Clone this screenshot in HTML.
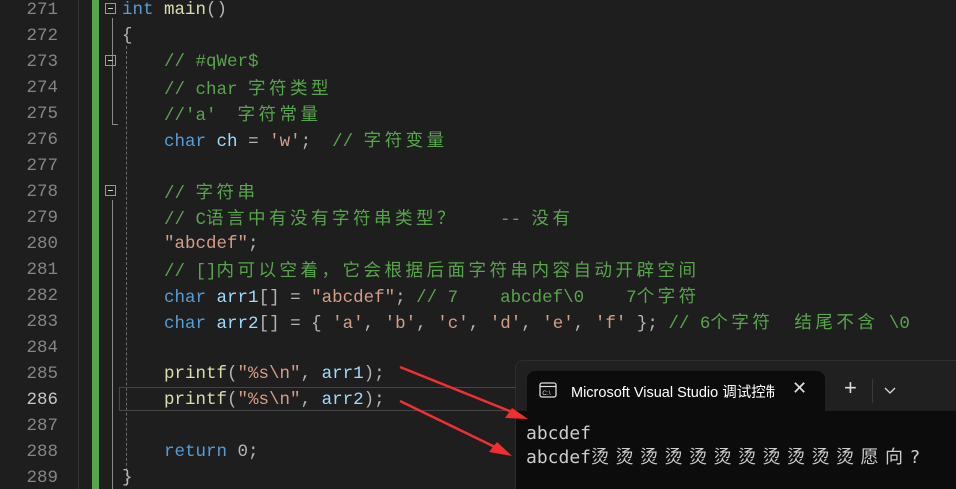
<!DOCTYPE html>
<html style="overflow:hidden;height:489px"><head><meta charset="utf-8"><style>
body{margin:0;width:956px;height:489px;background:#1e1e1e;overflow:hidden;position:relative;font-family:"Liberation Mono","Noto Sans CJK SC",monospace;}
.ln{position:absolute;left:0;width:58px;text-align:right;color:#858585;font-size:17.5px;height:26px;line-height:26px;}
.c{position:absolute;left:122px;font-size:17.5px;height:26px;line-height:26px;white-space:pre;color:#dcdcdc;}
.k{color:#569cd6}.cm{color:#57a64a}.s{color:#d69d85}.v{color:#9cdcfe}.f{color:#dcdcaa}.o{color:#b4b4b4}
.z{letter-spacing:3.5px;font-family:"Noto Sans CJK SC",sans-serif}
.term{position:absolute;left:515px;top:360px;width:445px;height:129px;background:#202020;border-radius:8px 0 0 0;border:1px solid #2e2e2e;border-bottom:0;overflow:hidden}
</style></head><body>
<div style="position:absolute;left:78px;top:0;width:1px;height:489px;background:#333"></div>
<div style="position:absolute;left:92px;top:0;width:7px;height:489px;background:#57a64a"></div>
<div style="position:absolute;left:112px;top:18px;width:1px;height:106px;background:#8a8a8a"></div>
<div style="position:absolute;left:112px;top:124px;width:6px;height:1px;background:#8a8a8a"></div>
<div style="position:absolute;left:112px;top:200px;width:1px;height:289px;background:#8a8a8a"></div>
<div style="position:absolute;left:126px;top:46px;width:0;height:440px;border-left:1px dashed #6a6a6a"></div>
<div style="position:absolute;left:105px;top:3px;width:11px;height:11px;border:1px solid #999;box-sizing:border-box"><div style="position:absolute;left:2px;top:4px;width:5px;height:1px;background:#ccc"></div></div>
<div style="position:absolute;left:105px;top:55px;width:11px;height:11px;border:1px solid #999;box-sizing:border-box"><div style="position:absolute;left:2px;top:4px;width:5px;height:1px;background:#ccc"></div></div>
<div style="position:absolute;left:105px;top:185px;width:11px;height:11px;border:1px solid #999;box-sizing:border-box"><div style="position:absolute;left:2px;top:4px;width:5px;height:1px;background:#ccc"></div></div>
<div style="position:absolute;left:119px;top:387px;width:420px;height:24px;border:1px solid #464646;box-sizing:border-box"></div>

<div class="ln" style="top:-3px">271</div><div class="ln" style="top:23px">272</div><div class="ln" style="top:49px">273</div><div class="ln" style="top:75px">274</div><div class="ln" style="top:101px">275</div><div class="ln" style="top:127px">276</div><div class="ln" style="top:153px">277</div><div class="ln" style="top:179px">278</div><div class="ln" style="top:205px">279</div><div class="ln" style="top:231px">280</div><div class="ln" style="top:257px">281</div><div class="ln" style="top:283px">282</div><div class="ln" style="top:309px">283</div><div class="ln" style="top:335px">284</div><div class="ln" style="top:361px">285</div><div class="ln" style="top:387px;color:#c6c6c6">286</div><div class="ln" style="top:413px">287</div><div class="ln" style="top:439px">288</div><div class="ln" style="top:465px">289</div>

<div class="c" style="top:-3px"><span class="k">int</span> <span class="f">main</span><span class="o">()</span></div>
<div class="c" style="top:23px"><span class="o">{</span></div>
<div class="c cm" style="top:49px">    // #qWer$</div>
<div class="c cm" style="top:75px">    // char <span class="z">字符类型</span></div>
<div class="c cm" style="top:101px">    //'a'  <span class="z">字符常量</span></div>
<div class="c" style="top:127px">    <span class="k">char</span> <span class="v">ch</span> <span class="o">=</span> <span class="s">'w'</span><span class="o">;</span>  <span class="cm">// <span class="z">字符变量</span></span></div>
<div class="c cm" style="top:179px">    // <span class="z">字符串</span></div>
<div class="c cm" style="top:205px">    // C<span class="z">语言中有没有字符串类型？</span>    -- <span class="z">没有</span></div>
<div class="c" style="top:231px">    <span class="s">"abcdef"</span><span class="o">;</span></div>
<div class="c cm" style="top:257px">    // []<span class="z">内可以空着，它会根据后面字符串内容自动开辟空间</span></div>
<div class="c" style="top:283px">    <span class="k">char</span> <span class="v">arr1</span><span class="o">[] =</span> <span class="s">"abcdef"</span><span class="o">;</span> <span class="cm">// 7    abcdef\0    7<span class="z">个字符</span></span></div>
<div class="c" style="top:309px">    <span class="k">char</span> <span class="v">arr2</span><span class="o">[] = {</span> <span class="s">'a'</span><span class="o">,</span> <span class="s">'b'</span><span class="o">,</span> <span class="s">'c'</span><span class="o">,</span> <span class="s">'d'</span><span class="o">,</span> <span class="s">'e'</span><span class="o">,</span> <span class="s">'f'</span> <span class="o">};</span> <span class="cm">// 6<span class="z">个字符</span>  <span class="z">结尾不含</span> \0</span></div>
<div class="c" style="top:361px">    <span class="f">printf</span><span class="o">(</span><span class="s">"%s\n"</span><span class="o">,</span> <span class="v">arr1</span><span class="o">);</span></div>
<div class="c" style="top:387px">    <span class="f">printf</span><span class="o">(</span><span class="s">"%s\n"</span><span class="o">,</span> <span class="v">arr2</span><span class="o">);</span></div>
<div class="c" style="top:439px">    <span class="k">return</span> <span class="o">0;</span></div>
<div class="c" style="top:465px"><span class="o">}</span></div>

<div class="term">
 <div style="position:absolute;left:11px;top:10px;width:298px;height:60px;background:#0c0c0c;border-radius:8px 8px 0 0"></div>
 <div style="position:absolute;left:0;top:50px;width:445px;height:90px;background:#0c0c0c"></div>
 <svg style="position:absolute;left:23px;top:21px" width="18" height="16" viewBox="0 0 18 16"><rect x="1" y="1" width="16" height="14" rx="2" fill="none" stroke="#ddd" stroke-width="1.3"/><line x1="1" y1="4.5" x2="17" y2="4.5" stroke="#ddd" stroke-width="1.2"/><text x="3.2" y="13" font-size="6.5" fill="#ddd" font-family="Liberation Sans">C:\</text></svg>
 <div style="position:absolute;left:55px;top:20px;width:204px;overflow:hidden;white-space:nowrap;color:#fff;font:14.5px 'Liberation Sans','Noto Sans CJK SC',sans-serif">Microsoft Visual Studio 调试控制台</div>
 <div style="position:absolute;left:276px;top:17px;color:#ddd;font:18px 'Liberation Sans',sans-serif">✕</div>
 <div style="position:absolute;left:328px;top:14px;color:#ddd;font:22px 'Liberation Sans',sans-serif">+</div>
 <div style="position:absolute;left:356px;top:18px;width:1px;height:24px;background:#3a3a3a"></div>
 <svg style="position:absolute;left:368px;top:26px" width="12" height="8"><path d="M1 1 L6 6 L11 1" fill="none" stroke="#ddd" stroke-width="1.3"/></svg>
 <div style="position:absolute;left:10px;top:61px;color:#cccccc;font:18px/23px 'DejaVu Sans Mono','Noto Sans CJK SC',monospace;white-space:pre">abcdef
abcdef<span style="font-family:'Noto Sans CJK SC',sans-serif;letter-spacing:6.5px">烫烫烫烫烫烫烫烫烫烫烫愿向</span>?</div>
</div>
<svg style="position:absolute;left:0;top:0" width="956" height="489">
 <path d="M400 367 L512 412" stroke="#f03030" stroke-width="2.5"/>
 <polygon points="528,419 505,418 512,408" fill="#f03030"/>
 <path d="M400 401 L497 448" stroke="#f03030" stroke-width="2.5"/>
 <polygon points="512,456 489,452 497,442" fill="#f03030"/>
</svg>
</body></html>
